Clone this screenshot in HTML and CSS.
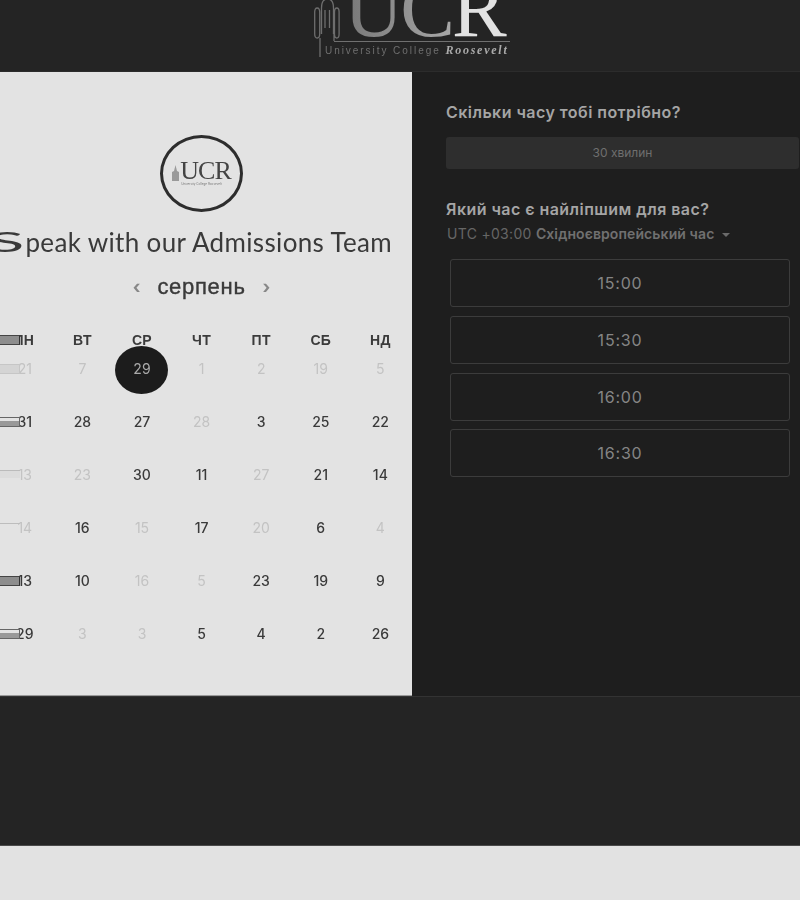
FILE: index.html
```html
<!DOCTYPE html>
<html lang="uk">
<head>
<meta charset="utf-8">
<title>Speak with our Admissions Team</title>
<link rel="stylesheet" href="styles.css">
</head>
<body>
<header class="top">
  <div class="logo">
    <svg class="tower" width="26" height="58" viewBox="0 0 26 58" fill="none" stroke="#6e6e6e" stroke-width="1.3">
      <path d="M6 57V38M0.700 12q0-4 2.500-4t2.500 4v22q0 4-2.500 4t-2.500-4zM7.500 34V8q0-9 6-9t6 9v26M11 10v18M15.500 10v18M20.500 12q0-4 2.300-4t2.300 4v22q0 4-2.300 4t-2.300-4zM20 30v11"/>
    </svg>
    <div class="wordmark">
      <div class="ucr"><span class="ucr-uc">UC</span><span class="ucr-r">R</span></div>
      <div class="rule"></div>
      <div class="tag">University College <em>Roosevelt</em></div>
    </div>
  </div>
</header>
<main class="split">
  <section class="left">
    <div class="badge">
      <div class="badge-row">
        <svg class="badge-tower" width="7" height="16" viewBox="0 0 7 16"><path d="M0 16V7l2-1 1.500-6 1.500 6 2 1v9z" fill="#9a9a9a"/></svg>
        <span class="badge-t">UCR</span>
      </div>
      <span class="badge-s">University College Roosevelt</span>
    </div>
    <h1 class="title"><span class="s-wide">S</span>peak with our Admissions Team</h1>
    <div class="month"><span class="chev">‹</span><span class="month-name">серпень</span><span class="chev">›</span></div>
    <div class="cal">
      <div class="dow"><i class="bar solid"></i>ПН</div><div class="dow">ВТ</div><div class="dow">СР</div><div class="dow">ЧТ</div><div class="dow">ПТ</div><div class="dow">СБ</div><div class="dow">НД</div>
      <div class="d off"><i class="bar light"></i>21</div><div class="d off">7</div><div class="d sel"><span>29</span></div><div class="d off">1</div><div class="d off">2</div><div class="d off">19</div><div class="d off">5</div>
      <div class="d"><i class="bar line"></i>31</div><div class="d">28</div><div class="d">27</div><div class="d off">28</div><div class="d">3</div><div class="d">25</div><div class="d">22</div>
      <div class="d off"><i class="bar faint"></i>13</div><div class="d off">23</div><div class="d">30</div><div class="d">11</div><div class="d off">27</div><div class="d">21</div><div class="d">14</div>
      <div class="d off"><i class="bar hair"></i>14</div><div class="d">16</div><div class="d off">15</div><div class="d">17</div><div class="d off">20</div><div class="d">6</div><div class="d off">4</div>
      <div class="d"><i class="bar solid"></i>13</div><div class="d">10</div><div class="d off">16</div><div class="d off">5</div><div class="d">23</div><div class="d">19</div><div class="d">9</div>
      <div class="d"><i class="bar line"></i>29</div><div class="d off">3</div><div class="d off">3</div><div class="d">5</div><div class="d">4</div><div class="d">2</div><div class="d">26</div>
    </div>
  </section>
  <section class="right">
    <h2 class="q">Скільки часу тобі потрібно?</h2>
    <div class="dur">30 хвилин</div>
    <h2 class="q q2">Який час є найліпшим для вас?</h2>
    <div class="tz">UTC +03:00 <span class="tz-name">Східноєвропейський час</span> <span class="caret"></span></div>
    <div class="slots">
      <div class="slot">15:00</div>
      <div class="slot">15:30</div>
      <div class="slot">16:00</div>
      <div class="slot">16:30</div>
    </div>
  </section>
</main>
<footer class="foot"></footer>
</body>
</html>
```
FILE: styles.css
```css
html, body { margin: 0; padding: 0; }
body { width: 800px; height: 900px; overflow: hidden; background: #e2e2e2; font-family: "Inter", "Liberation Sans", sans-serif; filter: blur(0.6px); }

.top { height: 72px; box-sizing: border-box; background: #242424; border-bottom: 1px solid #2c2c2c; overflow: hidden; display: flex; justify-content: center; }
.logo { display: flex; align-items: flex-start; width: 196px; margin-left: 24px; }
.tower { flex: none; margin-right: -6px; }
.wordmark { flex: 1; min-width: 0; }
.ucr { font-family: "Liberation Serif", serif; font-size: 82px; line-height: 82px; margin: -32px 0 0 10px; height: 73px; overflow: hidden; white-space: nowrap; letter-spacing: -3px; }
.ucr-uc { background: linear-gradient(90deg, #777, #a8a8a8); -webkit-background-clip: text; background-clip: text; color: transparent; }
.ucr-r { color: #e2e2e2; }
.rule { height: 1px; background: #707070; }
.tag { font-family: "Liberation Sans", sans-serif; font-size: 10px; line-height: 12px; letter-spacing: 1.95px; color: #6f6f6f; margin: 2px 0 0 -9px; white-space: nowrap; }
.tag em { font-family: "Liberation Serif", serif; font-size: 12px; font-weight: 700; color: #aaa; letter-spacing: 1.75px; }

.split { display: flex; height: 624px; }
.left { width: 412px; background: #e3e3e3; border-bottom: 1px solid #9a9a9a; overflow: hidden; display: flex; flex-direction: column; align-items: center; padding: 63px 9px 0 0; box-sizing: border-box; }
.badge { flex: none; width: 83px; height: 77px; box-sizing: border-box; border: 3px solid #2d2d2d; border-radius: 50%; padding-top: 19px; color: #444; text-align: center; }
.badge-row { display: flex; justify-content: center; align-items: flex-end; gap: 1px; }
.badge-tower { margin-bottom: 4px; }
.badge-t { font-family: "Liberation Serif", serif; font-size: 26px; line-height: 28px; letter-spacing: -1px; }
.badge-s { display: block; margin-top: -3px; font-size: 3px; line-height: 4px; color: #777; white-space: nowrap; }
.title { margin: 15px 0 0; font-family: "Lato", sans-serif; font-weight: 400; font-size: 26px; line-height: 30px; letter-spacing: 0.35px; color: #3a3a3a; white-space: nowrap; }
.s-wide { display: inline-block; transform: scaleX(2.6); transform-origin: right center; }
.month { display: flex; align-items: center; justify-content: center; gap: 17px; margin: 15px 0 0; height: 30px; }
.month-name { font-family: "Liberation Sans", sans-serif; font-size: 22px; letter-spacing: 0.7px; color: #3a3a3a; -webkit-text-stroke: 0.4px #3a3a3a; }
.chev { font-size: 18px; color: #888; line-height: 18px; font-weight: 700; }
.cal { align-self: flex-start; margin: 26px 0 0 -7px; display: grid; grid-template-columns: repeat(7, 59.6px); grid-template-rows: 31px; grid-auto-rows: 53px; }
.dow, .d { position: relative; text-align: center; font-size: 14px; }
.dow { font-family: "Liberation Sans", sans-serif; font-weight: 700; letter-spacing: 0.3px; color: #3b3b3b; line-height: 24px; }
.dow:first-child { padding-left: 2px; }
.d { font-weight: 500; color: #3a3a3a; line-height: 20px; }
.d:nth-child(7n+1) { padding-left: 4px; }
.off { color: #c3c3c3; font-weight: 400; }
.sel { color: #aaa; }
.sel span { display: block; width: 53px; height: 48px; margin: -13px auto 0; border-radius: 50%; background: #1c1c1c; line-height: 46px; font-weight: 400; }
.bar { position: absolute; left: 7px; top: 10px; width: 20px; height: 10px; margin-top: -5px; box-sizing: border-box; }
.dow .bar { top: 12px; }
.solid { background: #8d8d8d; border-top: 1px solid #444; border-bottom: 1px solid #444; border-right: 1px solid #333; }
.light { background: #d4d4d4; border: 1px solid #c6c6c6; border-left: 0; }
.line { border: 1.500px solid #666; border-left: 0; background: linear-gradient(#e3e3e3 40%, #999 40%); }
.faint { background: linear-gradient(#bbb 15%, #dcdcdc 15%); height: 8px; }
.hair { height: 1px; background: #bdbdbd; }

.right { width: 388px; background: #1e1e1e; padding: 30px 0 0 34px; box-sizing: border-box; }
.q { margin: 0; font-size: 16px; font-weight: 600; letter-spacing: 0.45px; color: #a5a5a5; line-height: 20px; white-space: nowrap; }
.dur { margin-top: 15px; width: 353px; height: 32px; background: #2e2e2e; border-radius: 3px; font-size: 12px; line-height: 32px; text-align: center; color: #6f6f6f; }
.q2 { margin-top: 30px; }
.tz { margin: 5px 0 0 1px; font-size: 14px; font-weight: 400; letter-spacing: 0.3px; line-height: 20px; color: #666; white-space: nowrap; }
.tz-name { font-weight: 600; color: #707070; letter-spacing: 0.1px; }
.caret { display: inline-block; width: 0; height: 0; border: 4px solid transparent; border-top-color: #6b6b6b; border-bottom: 0; vertical-align: middle; margin-left: 3px; }
.slots { display: flex; flex-direction: column; gap: 8.800px; margin: 15px 0 0 4px; width: 340px; }
.slot { height: 48px; box-sizing: border-box; border: 1px solid #3c3c3c; border-radius: 3px; text-align: center; line-height: 46px; font-size: 16px; letter-spacing: 0.8px; color: #858585; }

.foot { height: 150px; background: #242424; border-top: 1px solid #333; border-bottom: 1px solid #4a4a4a; box-sizing: border-box; }
```
